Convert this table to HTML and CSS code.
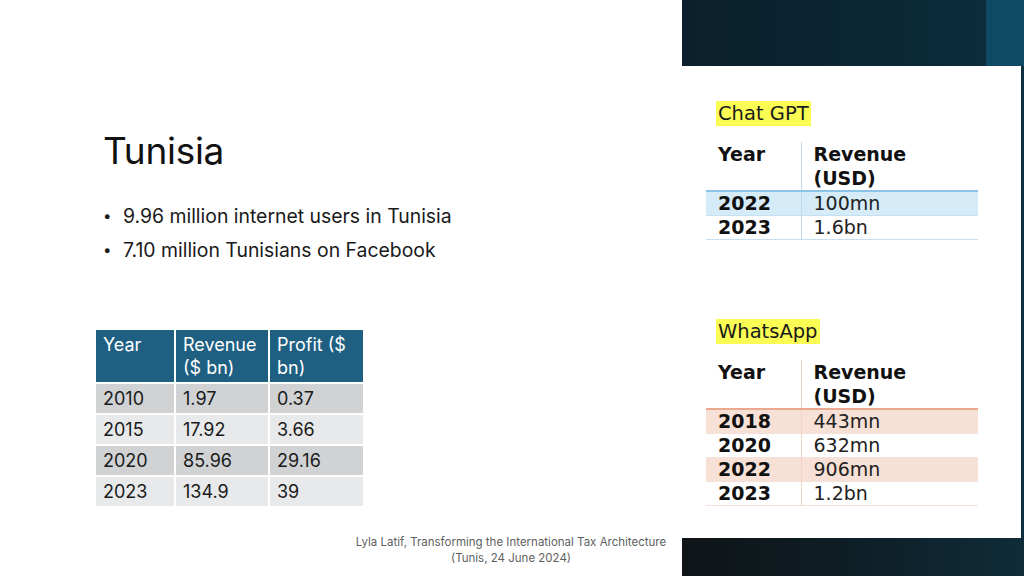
FILE: index.html
```html
<!DOCTYPE html>
<html>
<head>
<meta charset="utf-8">
<link rel="stylesheet" href="styles.css">
</head>
<body>
<div class="slide">
  <main class="left">
    <h1 class="title">Tunisia</h1>
    <ul class="bullets">
      <li>9.96 million internet users in Tunisia</li>
      <li>7.10 million Tunisians on Facebook</li>
    </ul>
    <table class="fb">
      <thead>
        <tr><th class="c1">Year</th><th class="c2">Revenue ($ bn)</th><th class="c3">Profit ($ bn)</th></tr>
      </thead>
      <tbody>
        <tr class="dark"><td>2010</td><td>1.97</td><td>0.37</td></tr>
        <tr class="light"><td>2015</td><td>17.92</td><td>3.66</td></tr>
        <tr class="dark"><td>2020</td><td>85.96</td><td>29.16</td></tr>
        <tr class="light"><td>2023</td><td>134.9</td><td>39</td></tr>
      </tbody>
    </table>
    <footer class="footer">Lyla Latif, Transforming the International Tax Architecture<br>(Tunis, 24 June 2024)</footer>
  </main>
  <aside class="right">
    <div class="strip"></div>
    <div class="card">
      <section class="block">
        <span class="hl">Chat GPT</span>
        <table class="rev blue">
          <thead><tr><th class="y">Year</th><th>Revenue<br>(USD)</th></tr></thead>
          <tbody>
            <tr class="shade"><td class="y">2022</td><td>100mn</td></tr>
            <tr><td class="y">2023</td><td>1.6bn</td></tr>
          </tbody>
        </table>
      </section>
      <section class="block second">
        <span class="hl">WhatsApp</span>
        <table class="rev orange">
          <thead><tr><th class="y">Year</th><th>Revenue<br>(USD)</th></tr></thead>
          <tbody>
            <tr class="shade"><td class="y">2018</td><td>443mn</td></tr>
            <tr><td class="y">2020</td><td>632mn</td></tr>
            <tr class="shade"><td class="y">2022</td><td>906mn</td></tr>
            <tr><td class="y">2023</td><td>1.2bn</td></tr>
          </tbody>
        </table>
      </section>
    </div>
  </aside>
</div>
</body>
</html>
```

FILE: styles.css
```css
* { box-sizing: border-box; }
html, body { margin: 0; padding: 0; }
body { width: 1024px; height: 576px; overflow: hidden; background: #fff; font-family: "Inter", "Liberation Sans", sans-serif; }
.slide { display: flex; width: 1024px; height: 576px; }

.left { width: 682px; height: 576px; display: flex; flex-direction: column; padding-left: 96px; }
.title { margin: 128px 0 0 7px; font-weight: 400; font-size: 37px; line-height: 46px; color: #111; letter-spacing: -0.3px; }
.bullets { list-style: none; margin: 25px 0 0 7px; padding: 0; font-size: 19.4px; color: #1a1a1a; }
.bullets li { position: relative; padding-left: 20px; line-height: 34px; }
.bullets li::before { content: "\2022"; position: absolute; left: 0; top: 0; font-size: 15px; }

.fb { margin: 61px 0 0 -2px; border-collapse: collapse; width: 271px; font-size: 18px; }
.fb th, .fb td { border: 2px solid #fff; text-align: left; vertical-align: top; padding: 2px 6px 0 7px; }
.fb th { background: #1f5f82; color: #fff; font-weight: 400; height: 54px; line-height: 23px; padding-top: 3px; }
.fb td { height: 31px; line-height: 26px; color: #1a1a1a; }
.fb .c1 { width: 80px; }
.fb .c2 { width: 94px; }
.fb tr.dark td { background: #d0d2d4; }
.fb tr.light td { background: #e8e9ea; }

.footer { margin: auto 0 10px 244px; width: 342px; text-align: center; font-size: 11.5px; line-height: 16px; color: #5f5f5f; }

.right { position: relative; width: 342px; height: 576px; background: linear-gradient(90deg, #0b202c 0%, #0b2735 60%, #0d2f3f 100%); display: flex; flex-direction: column; }
.right::after { content: ""; position: absolute; left: 0; right: 0; bottom: 0; height: 38px; background: linear-gradient(90deg, #0f1417 0%, #0e1d24 45%, #0f2c39 100%); }
.strip { position: absolute; right: 0; top: 0; width: 38px; height: 66px; background: #0e4a63; }
.card { margin-top: 66px; width: 339px; height: 472px; background: #fff; padding: 35px 0 0 24px; font-family: "DejaVu Sans", Verdana, sans-serif; color: #111; }
.block .hl { display: inline-block; background: #fbfd55; font-size: 19.5px; line-height: 25px; padding: 0 2px 0 2px; margin-left: 10px; color: #1a1a1a; }
.block { display: flex; flex-direction: column; align-items: flex-start; }
.second { margin-top: 79px; }
.rev { margin-top: 16px; border-collapse: collapse; width: 272px; font-size: 19px; margin-left: 0; }
.rev th, .rev td { text-align: left; padding: 0 0 0 12px; vertical-align: top; }
.rev th { font-weight: 700; line-height: 24px; }
.rev td { line-height: 23px; }
.rev .y { width: 95px; font-weight: 700; }
.rev td:not(.y) { color: #222; font-weight: 400; }
.rev th:first-child, .rev td:first-child { border-right: 1px solid; }
.blue th:first-child, .blue td:first-child { border-right-color: #bfdcef; }
.blue thead tr { border-bottom: 2px solid #8cc4e8; }
.blue tbody tr { border-bottom: 1px solid #c4e0f2; }
.blue tr.shade { background: #d5ebf8; }
.orange th:first-child, .orange td:first-child { border-right-color: #f2d2c6; }
.orange thead tr { border-bottom: 2px solid #eaa98e; }
.orange tbody tr { border-bottom: 1px solid #f4e2da; }
.orange tr.shade { background: #f7e0d5; }
```
